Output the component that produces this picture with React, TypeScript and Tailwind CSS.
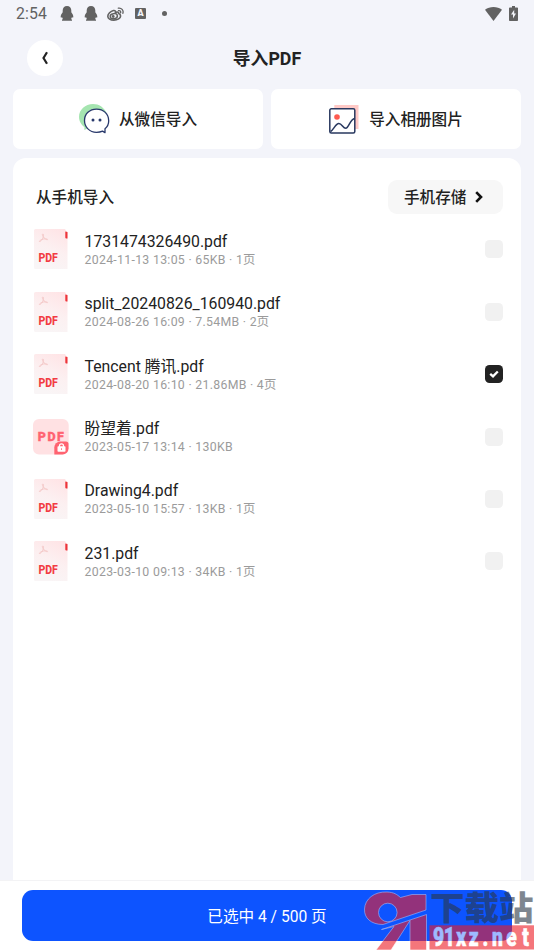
import React from "react";

type FileItem = { name: string; meta: string; locked?: boolean; checked?: boolean };

const files: FileItem[] = [
  { name: "1731474326490.pdf", meta: "2024-11-13 13:05 · 65KB · 1页" },
  { name: "split_20240826_160940.pdf", meta: "2024-08-26 16:09 · 7.54MB · 2页" },
  { name: "Tencent 腾讯.pdf", meta: "2024-08-20 16:10 · 21.86MB · 4页", checked: true },
  { name: "盼望着.pdf", meta: "2023-05-17 13:14 · 130KB", locked: true },
  { name: "Drawing4.pdf", meta: "2023-05-10 15:57 · 13KB · 1页" },
  { name: "231.pdf", meta: "2023-03-10 09:13 · 34KB · 1页" },
];

function Penguin() {
  return (
    <svg className="h-[15px] w-[14px]" viewBox="0 0 14 15" fill="#626262">
      <path d="M7 0C4.300 0 2.700 2 2.700 4.600v1.600C1.500 7.700.6 9.400.7 11c.1.9.7.8 1.300 0 .2.800.5 1.400.9 1.900-.6.3-.9.600-.9 1.100v.8h10v-.8c0-.5-.3-.8-.9-1.100.4-.5.7-1.100.9-1.900.6.8 1.200.9 1.300 0 .1-1.600-.8-3.300-2-4.800V4.600C11.300 2 9.700 0 7 0Z" />
    </svg>
  );
}

function Weibo() {
  return (
    <svg className="h-[14px] w-[17px]" viewBox="0 0 17 14" fill="none" stroke="#626262">
      <path d="M6.500 3.500C3.500 4.200.8 7 .8 9.200c0 2.400 2.700 3.900 6 3.900 3.800 0 6.800-2 6.800-4.200 0-1.200-.8-1.900-1.900-2.300.3-1.500-1-2-3.200-1.100.3-1.300-.3-2.300-2-2Z" strokeWidth="1.600" />
      <ellipse cx="6.800" cy="9.200" rx="3.600" ry="2.500" strokeWidth="1.500" transform="rotate(-10 6.800 9.200)" />
      <circle cx="6.200" cy="9.500" r="1.400" fill="#626262" stroke="none" />
      <path d="M11.500 3.600c1.500-.3 2.500.8 2.100 2.200M11.300 1.100c3.200-.5 5.500 2 4.600 5.200" strokeWidth="1.300" strokeLinecap="round" />
    </svg>
  );
}

function StatusBar() {
  return (
    <div className="flex h-[28px] items-center pr-[16px] pb-[1px] pl-[16px]">
      <span className="w-[44px] text-[15.8px] leading-[28px] tracking-[0.1px] text-[#626262]">2:54</span>
      <Penguin />
      <div className="ml-[10px] flex"><Penguin /></div>
      <div className="ml-[9px] flex"><Weibo /></div>
      <span className="ml-[11px] flex h-[11px] w-[11px] items-center justify-center rounded-[1px] bg-[#626262] text-[9px] leading-none font-black text-[#f3f4fa]">A</span>
      <span className="ml-[16px] h-[5px] w-[5px] rounded-full bg-[#626262]" />
      <svg className="ml-auto h-[14px] w-[17px]" viewBox="0 0 17 14" fill="#626262">
        <path d="M0 2.800C4.700-.8 12.300-.8 17 2.800L8.500 14Z" />
      </svg>
      <svg className="ml-[7px] h-[15px] w-[9px]" viewBox="0 0 9 15">
        <path d="M3 0h3v1.400h2.200c.5 0 .8.3.8.8v12c0 .5-.3.8-.8.8H.8c-.5 0-.8-.3-.8-.8v-12c0-.5.3-.8.8-.8H3Z" fill="#626262" />
        <path d="M5.200 3.800 2 8.600h2v3.800l3-5H5.200Z" fill="#f3f4fa" />
      </svg>
    </div>
  );
}

function WechatIcon() {
  return (
    <svg className="h-[30px] w-[31px]" viewBox="0 0 31 30">
      <path d="M14 0C6.300 0 0 5.700 0 12.800c0 4.600 2.400 8.200 5.400 10.200V26l4-2h8l10.200-15C25 3.300 20 0 14 0Z" fill="#a5e5b0" />
      <path d="M17.500 5.100C10.600 5.100 5.500 9.900 5.500 16.500S10.600 28.300 17.500 28.300c2.500 0 4.600-.5 6-1.200l2.500 1.500v-3.800c2.500-2 3.700-4.700 3.700-8C29.700 9.900 24.500 5.100 17.500 5.100Z" fill="white" stroke="#28386b" strokeWidth="1.300" strokeLinejoin="round" />
      <circle cx="14" cy="16" r="1.500" fill="#28386b" />
      <circle cx="21" cy="16" r="1.500" fill="#28386b" />
    </svg>
  );
}

function AlbumIcon() {
  return (
    <svg className="h-[29px] w-[30px]" viewBox="0 0 30 29">
      <path d="M5.300 0H29.500V24H5.300Z" fill="#ffc9c6" />
      <rect x=".8" y="3.800" width="25" height="24.300" rx="1.500" fill="white" stroke="#28385f" strokeWidth="1.500" />
      <circle cx="8" cy="12" r="2.800" fill="#ff5b50" />
      <path d="M1.500 26.500C5 24.500 6.500 18.500 9.800 18.500s4 4.800 7 4.800 4-9 9-9.800" fill="none" stroke="#28385f" strokeWidth="1.500" />
    </svg>
  );
}

function PdfIcon() {
  return (
    <svg className="h-[40px] w-[34px]" viewBox="0 0 34 40">
      <defs>
        <linearGradient id="paper" x1=".9" y1="0" x2=".5" y2="1">
          <stop offset="0" stopColor="#ffe3e5" />
          <stop offset=".55" stopColor="#fcf0f1" />
          <stop offset="1" stopColor="#f9f5f6" />
        </linearGradient>
      </defs>
      <path d="M1.500 0H31L33.500 4V40H1.500A1.500 1.500 0 0 1 0 38.500v-37A1.500 1.500 0 0 1 1.500 0Z" fill="url(#paper)" />
      <path d="M31.300 2.500 33.500 3v6.500H32.300A1 1 0 0 1 31.300 8.500Z" fill="#ed343a" />
      <path d="M9 5c1 0 .5 2.800-.2 4.200S6.500 12.800 5.500 12.500s2-2.200 4-2.500 4.300-.2 4.100.6-3.400-1-4.500-3S8.200 5 9 5Z" fill="none" stroke="#f3c6c5" strokeWidth=".9" />
      <text x="4.400" y="33.300" textLength="19.500" lengthAdjust="spacingAndGlyphs" fontFamily="Roboto, sans-serif" fontSize="12.500" fontWeight="800" fill="#f23c43">PDF</text>
    </svg>
  );
}

function LockedIcon() {
  return (
    <svg className="h-[37px] w-[36px]" viewBox="0 0 36 37">
      <rect width="35.700" height="35.500" rx="6" fill="#ffe1e3" />
      <text x="4.800" y="22.200" textLength="26" lengthAdjust="spacing" fontFamily="Roboto, sans-serif" fontSize="12.500" fontWeight="900" fill="#ff6371" stroke="#ff6371" strokeWidth=".3">PDF</text>
      <path d="M21.300 28.500a6 6 0 0 1 6-6H33a2.500 2.500 0 0 1 2.500 2.500v4.500a6 6 0 0 1-6 6h-8.200Z" fill="#ff6371" />
      <rect x="24.500" y="27.300" width="8" height="5.500" rx=".8" fill="white" />
      <path d="M26.500 28v-1.200a2 2 0 0 1 4 0V28" stroke="white" strokeWidth="1.300" fill="none" />
      <path d="M28.500 29.300v1.600" stroke="#ff6371" strokeWidth=".9" />
    </svg>
  );
}

function Row({ file }: { file: FileItem }) {
  return (
    <li className="flex h-[62.4px] items-start pr-[18px] pl-[21px]">
      {file.locked ? (
        <div className="-ml-[1px] w-[51.500px] pt-[2px]"><LockedIcon /></div>
      ) : (
        <div className="w-[50.500px]"><PdfIcon /></div>
      )}
      <div className="flex flex-col pt-[1.4px]">
        <span className="h-[21px] text-[15.8px] leading-[21px] whitespace-nowrap text-[#222]">{file.name}</span>
        <span className="h-[16px] text-[12.3px] leading-[16px] tracking-[0.3px] whitespace-nowrap text-[#9b9b9b]">{file.meta}</span>
      </div>
      <span className={file.checked
        ? "mt-[11px] ml-auto flex h-[18px] w-[18px] items-center justify-center rounded-[4.500px] bg-[#222]"
        : "mt-[11px] ml-auto h-[18px] w-[18px] rounded-[4.500px] bg-[#f1f1f1]"}>
        {file.checked && (
          <svg className="h-[8px] w-[10px]" viewBox="0 0 10 8"><path d="M1.200 3.900 4 6.400 8.800 1.500" fill="none" stroke="white" strokeWidth="2.300" /></svg>
        )}
      </span>
    </li>
  );
}

function Watermark() {
  return (
    <svg className="pointer-events-none absolute top-[880px] left-[360px] h-[70px] w-[174px] opacity-60" viewBox="360 880 174 70">
      <g fill="#ed1c24" stroke="#fff" strokeWidth=".6">
        <path fillRule="evenodd" d="M364.500 909C365 899 374 891.500 387 892c7 .3 10 2.500 13.500 5.500L412 894.500h14V910L383 924.500C371 924.500 364 918 364.500 909ZM378.500 912.500a9.300 9.300 0 1 0 18.600 0 9.300 9.300 0 1 0-18.600 0Z" />
        <path d="M381.500 929.500 426.500 914.500V950H410V920.500L391 950H376L394 926.500Z" />
      </g>
      <rect x="429.500" y="925.300" width="105" height="24.200" fill="#ed1c24" />
      <text x="430" y="919.500" textLength="103.500" lengthAdjust="spacingAndGlyphs" fontFamily="'Noto Sans CJK SC', sans-serif" fontSize="33.500" fontWeight="900" fill="#2a3746">下载站</text>
      <g transform="translate(433 945.500) scale(.74 1)">
        <text x="7.500 22 38 55 71 87 106 125" y="0" textAnchor="middle" fontFamily="Roboto, sans-serif" fontSize="26" fontWeight="900" fill="#fff" stroke="#fff" strokeWidth=".6">91xz.net</text>
      </g>
    </svg>
  );
}

export default function App() {
  return (
    <div className="relative flex h-[950px] w-[534px] flex-col overflow-hidden bg-[#f3f4fa] font-['Roboto','Noto_Sans_CJK_SC',sans-serif] text-[#222]">
      <StatusBar />
      <header className="grid h-[61px] shrink-0 grid-cols-[1fr_auto_1fr] items-center px-[27px] pb-[1px]">
        <button className="flex h-[36px] w-[36px] items-center justify-center rounded-full bg-white">
          <svg className="h-[14px] w-[8px]" viewBox="0 0 8 14"><path d="M6 1.200 2.500 7 6 12.800" fill="none" stroke="#222" strokeWidth="2.200" /></svg>
        </button>
        <h1 className="pt-[1px] text-[17.8px] leading-[24px] font-bold">导入PDF</h1>
      </header>
      <div className="flex h-[60px] shrink-0 gap-[8px] px-[13px]">
        <button className="flex flex-1 items-center justify-center gap-[9px] rounded-[7px] bg-white text-[15.6px] font-medium"><WechatIcon /><span className="pt-[3px]">从微信导入</span></button>
        <button className="flex flex-1 items-center justify-center gap-[10px] rounded-[7px] bg-white text-[15.6px] font-medium"><AlbumIcon /><span className="pt-[3px]">导入相册图片</span></button>
      </div>
      <main className="mx-[13px] mt-[9px] flex-1 rounded-t-[13px] bg-white">
        <div className="flex h-[71.4px] items-start justify-between pt-[22px] pr-[18px] pl-[23px]">
          <h2 className="pt-[1px] text-[15.6px] leading-[34px] font-medium">从手机导入</h2>
          <button className="flex h-[34px] w-[115px] items-center rounded-[9px] bg-[#f7f7f7] pl-[16px] text-[15.6px] font-medium">
            <span className="pt-[4px]">手机存储</span>
            <svg className="ml-[9px] h-[12px] w-[8px]" viewBox="0 0 8 12"><path d="M1.200 1.200 6 6 1.200 10.800" fill="none" stroke="#111" strokeWidth="2.600" /></svg>
          </button>
        </div>
        <ul>{files.map((file) => <Row key={file.name} file={file} />)}</ul>
      </main>
      <footer className="h-[70px] shrink-0 border-t border-[#f3f3f5] bg-white px-[22px] pt-[9px]">
        <button className="h-[51px] w-full rounded-[11px] bg-[#0d54ff] pt-[4px] text-[15.600px] text-white">已选中 4 / 500 页</button>
      </footer>
      <Watermark />
    </div>
  );
}
